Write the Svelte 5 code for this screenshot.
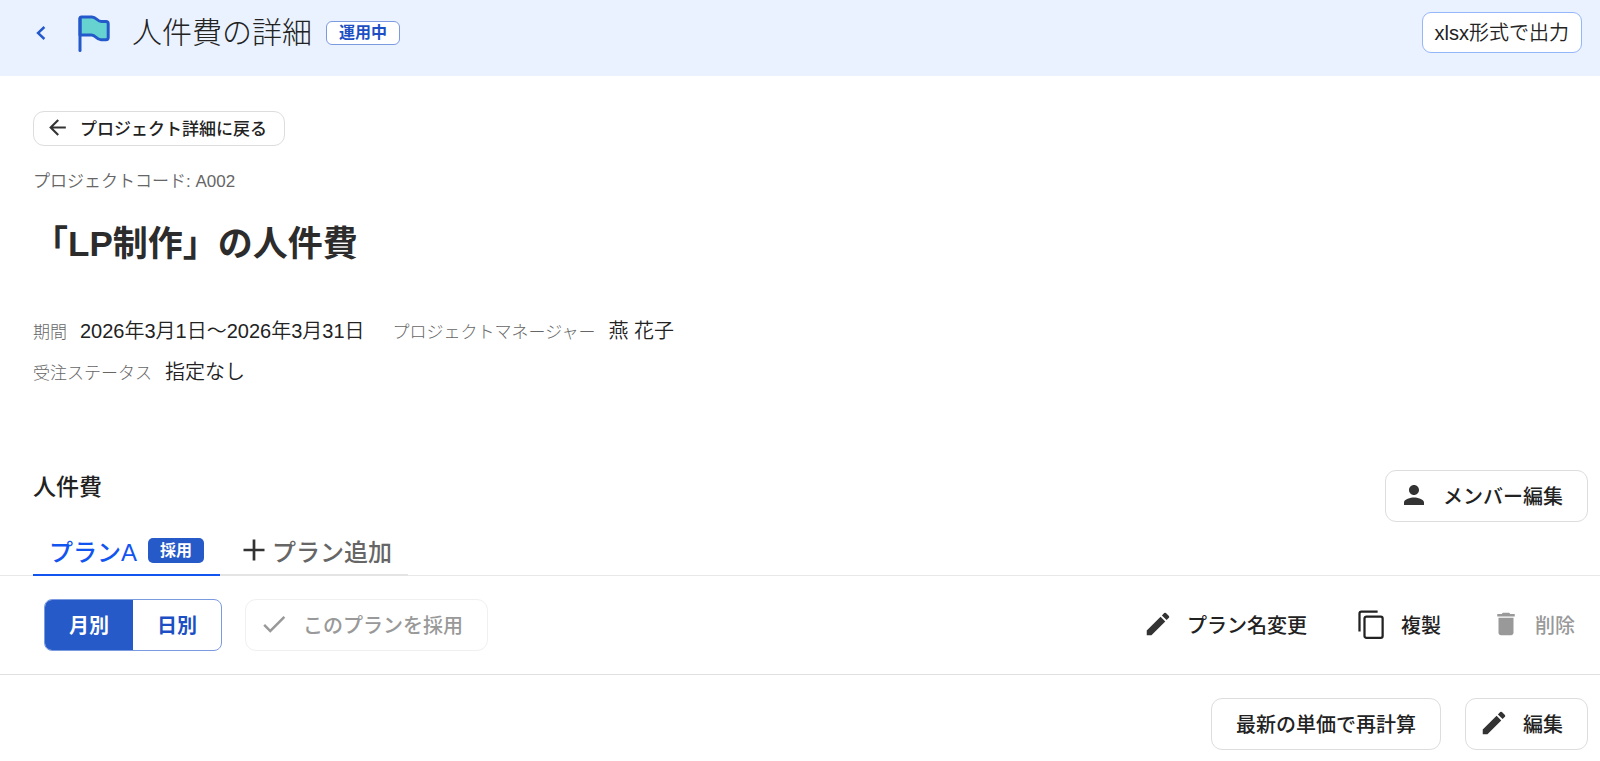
<script>
    let view = $state("month");

    const details = [
        { label: "期間", value: "2026年3月1日～2026年3月31日" },
        { label: "プロジェクトマネージャー", value: "燕 花子" },
        { label: "受注ステータス", value: "指定なし", newRow: true },
    ];
</script>

{#snippet pencil()}
    <svg class="icon" viewBox="0 0 24 24" aria-hidden="true">
        <path d="M3 17.25V21h3.75L17.81 9.94l-3.75-3.75L3 17.25zM20.71 7.04a1 1 0 0 0 0-1.41l-2.34-2.34a1 1 0 0 0-1.41 0l-1.83 1.83 3.75 3.75 1.83-1.83z" />
    </svg>
{/snippet}

<header>
    <a class="prev" href="#back" aria-label="戻る">
        <svg viewBox="0 0 10 16" aria-hidden="true">
            <path d="M8.4 2 2 8l6.4 6" />
        </svg>
    </a>
    <svg class="flag" viewBox="0 0 32 38" aria-hidden="true">
        <path class="cloth" d="M2 3.5Q2 2 3.5 2H14c4.5 0 5 4.5 9.500 4.500H28q2.200 0 2.200 2.200V22.500q0 2.200-2.200 2.200H23c-5 0-5-4.700-9.500-4.700H2z" />
        <path d="M2 3.5V35.5" />
    </svg>
    <h1>人件費の詳細</h1>
    <span class="status">運用中</span>
    <button class="export" type="button">xlsx形式で出力</button>
</header>

<main>
    <div class="intro">
        <a class="back" href="#project">
            <svg viewBox="0 0 24 24" aria-hidden="true">
                <path d="M20 11H7.83l5.59-5.59L12 4l-8 8 8 8 1.41-1.41L7.83 13H20v-2z" />
            </svg>
            プロジェクト詳細に戻る
        </a>
        <p class="code">プロジェクトコード: A002</p>
        <h2>「LP制作」の人件費</h2>
        <dl>
            {#each details as item}
                <div class:new-row={item.newRow}>
                    <dt>{item.label}</dt>
                    <dd>{item.value}</dd>
                </div>
            {/each}
        </dl>
    </div>

    <section>
        <div class="section-head">
            <h3>人件費</h3>
            <button class="btn with-icon" type="button">
                <svg class="icon" viewBox="0 0 24 24" aria-hidden="true">
                    <path d="M12 12c2.21 0 4-1.79 4-4s-1.79-4-4-4-4 1.79-4 4 1.79 4 4 4zm0 2c-2.67 0-8 1.34-8 4v2h16v-2c0-2.66-5.33-4-8-4z" />
                </svg>
                メンバー編集
            </button>
        </div>

        <nav>
            <button class="tab active" type="button">
                プランA <span class="badge">採用</span>
            </button>
            <button class="tab" type="button">
                <svg class="plus" viewBox="0 0 24 24" aria-hidden="true">
                    <path d="M19 12.9h-6.1V19h-1.8v-6.1H5v-1.8h6.1V5h1.8v6.1H19z" />
                </svg>
                プラン追加
            </button>
        </nav>

        <div class="toolbar">
            <div class="toggle">
                <button type="button" class:on={view === "month"} onclick={() => (view = "month")}>月別</button>
                <button type="button" class:on={view === "day"} onclick={() => (view = "day")}>日別</button>
            </div>
            <button class="btn with-icon" type="button" disabled>
                <svg class="icon" viewBox="0 0 24 24" aria-hidden="true">
                    <path d="M9 16.17 4.83 12l-1.42 1.41L9 19 21 7l-1.41-1.41z" />
                </svg>
                このプランを採用
            </button>
            <div class="actions">
                <button class="plain" type="button">
                    {@render pencil()}
                    プラン名変更
                </button>
                <button class="plain" type="button">
                    <svg class="icon copy" viewBox="0 0 24 24" aria-hidden="true">
                        <path d="M16.5 2H3.5Q2 2 2 3.5V18" />
                        <rect x="6" y="6" width="14.5" height="17" rx="1.5" />
                    </svg>
                    複製
                </button>
                <button class="plain" type="button" disabled>
                    <svg class="icon" viewBox="0 0 24 24" aria-hidden="true">
                        <path d="M6 19c0 1.1.9 2 2 2h8c1.1 0 2-.9 2-2V7H6v12zM19 4h-3.5l-1-1h-5l-1 1H5v2h14V4z" />
                    </svg>
                    削除
                </button>
            </div>
        </div>

        <div class="edit-bar">
            <button class="btn" type="button">最新の単価で再計算</button>
            <button class="btn with-icon" type="button">
                {@render pencil()}
                編集
            </button>
        </div>
    </section>
</main>

<style>
    :global(body) {
        margin: 0;
        background: #fff;
        color: #222;
        font-family: "Liberation Sans", "Noto Sans CJK JP", sans-serif;
        font-size: 20px;
    }

    h1,
    h2,
    h3,
    p,
    dl,
    dd {
        margin: 0;
    }

    a {
        text-decoration: none;
    }

    button {
        box-sizing: border-box;
        font: inherit;
        color: inherit;
        background: none;
        border: 0;
        padding: 0;
        white-space: nowrap;
        cursor: pointer;
    }

    button:disabled {
        color: #999;
        cursor: default;
    }

    header {
        box-sizing: border-box;
        display: flex;
        align-items: center;
        height: 76px;
        padding: 0 18px 11px 36px;
        background: #eaf2ff;
    }

    .prev svg {
        display: block;
        width: 10px;
        height: 16px;
        fill: none;
        stroke: #2459cb;
        stroke-width: 2.4;
    }

    .flag {
        width: 32px;
        height: 38px;
        margin: 2px 22px 0 32px;
        fill: none;
        stroke: #2459cb;
        stroke-width: 3;
        stroke-linecap: round;
        stroke-linejoin: round;
    }

    .cloth {
        fill: #66d3d1;
    }

    h1 {
        font-size: 30px;
        font-weight: 300;
        line-height: 40px;
    }

    .status {
        margin-left: 14px;
        padding: 0 12px;
        border: 1px solid #7b9ae0;
        border-radius: 6px;
        background: #fff;
        color: #1d4fc4;
        font-size: 16px;
        font-weight: 700;
        line-height: 22px;
    }

    .export {
        height: 41px;
        margin-left: auto;
        padding: 0 12px 2px;
        border: 1px solid #94b6fa;
        border-radius: 9px;
        background: #fff;
        font-weight: 350;
    }

    .intro {
        padding: 35px 33px 0;
    }

    .back {
        box-sizing: border-box;
        display: inline-flex;
        align-items: center;
        gap: 10px;
        height: 35px;
        padding: 0 17px 2px 11px;
        border: 1px solid #ddd;
        border-radius: 11px;
        color: #222;
        font-size: 17px;
        font-weight: 500;
        vertical-align: top;
    }

    .back svg {
        width: 25px;
        height: 25px;
        fill: #333;
    }

    .code {
        margin-top: 24px;
        color: #666;
        font-size: 17px;
        font-weight: 350;
        line-height: 24px;
    }

    h2 {
        margin-top: 26px;
        color: #2c2c2c;
        font-size: 35px;
        font-weight: 700;
        line-height: 48px;
    }

    dl {
        display: grid;
        grid-template-columns: max-content max-content;
        gap: 11px 28px;
        margin-top: 49px;
    }

    dl div {
        display: flex;
        align-items: baseline;
        gap: 13px;
        line-height: 28px;
    }

    .new-row {
        grid-column: 1 / -1;
    }

    dt {
        color: #666;
        font-size: 17px;
        font-weight: 300;
    }

    dd {
        font-weight: 350;
    }

    .section-head {
        display: flex;
        justify-content: space-between;
        align-items: flex-start;
        margin-top: 82px;
        padding: 0 12px 0 33px;
    }

    h3 {
        font-size: 23px;
        font-weight: 500;
        line-height: 34px;
    }

    .btn {
        height: 52px;
        padding: 0 24px 2px;
        border: 1px solid #ddd;
        border-radius: 11px;
        background: #fff;
        font-weight: 500;
    }

    .btn:disabled {
        border-color: #f0f0f0;
    }

    .with-icon,
    .plain {
        display: flex;
        align-items: center;
        gap: 14px;
    }

    .with-icon {
        padding-left: 13px;
    }

    .icon {
        width: 30px;
        height: 30px;
        fill: #333;
    }

    button:disabled .icon {
        fill: #999;
    }

    .copy {
        overflow: visible;
        fill: none;
        stroke: #222;
        stroke-width: 1.8;
    }

    nav {
        display: flex;
        margin-top: 6px;
        padding: 0 33px;
        box-shadow: inset 0 -1px #e8e8e8;
    }

    .tab {
        display: flex;
        align-items: center;
        height: 48px;
        padding: 0 16px 2px;
        border-bottom: 2px solid #e4e4e4;
        color: #666;
        font-size: 24px;
        font-weight: 500;
    }

    .tab.active {
        gap: 11px;
        border-bottom-color: #1254f0;
        color: #1254f0;
    }

    .badge {
        padding: 0 12px;
        border-radius: 5px;
        background: #265ac8;
        color: #fff;
        font-size: 16px;
        font-weight: 700;
        line-height: 25px;
    }

    .plus {
        width: 36px;
        height: 36px;
        fill: #333;
    }

    .toolbar {
        display: flex;
        align-items: center;
        padding: 23px 12px 23px 44px;
        border-bottom: 1px solid #e0e0e0;
    }

    .toggle {
        display: flex;
        margin-right: 23px;
        border: 1px solid #7b9ae0;
        border-radius: 8px;
        overflow: hidden;
    }

    .toggle button {
        height: 50px;
        padding: 0 24px 2px;
        color: #1d4fc4;
        font-weight: 700;
    }

    .toggle .on {
        background: #265ac8;
        color: #fff;
    }

    .actions {
        display: flex;
        gap: 24px;
        margin-left: auto;
    }

    .plain {
        height: 52px;
        padding: 0 13px 2px;
        font-weight: 500;
    }

    .edit-bar {
        display: flex;
        justify-content: flex-end;
        gap: 24px;
        padding: 23px 12px 10px;
    }
</style>
